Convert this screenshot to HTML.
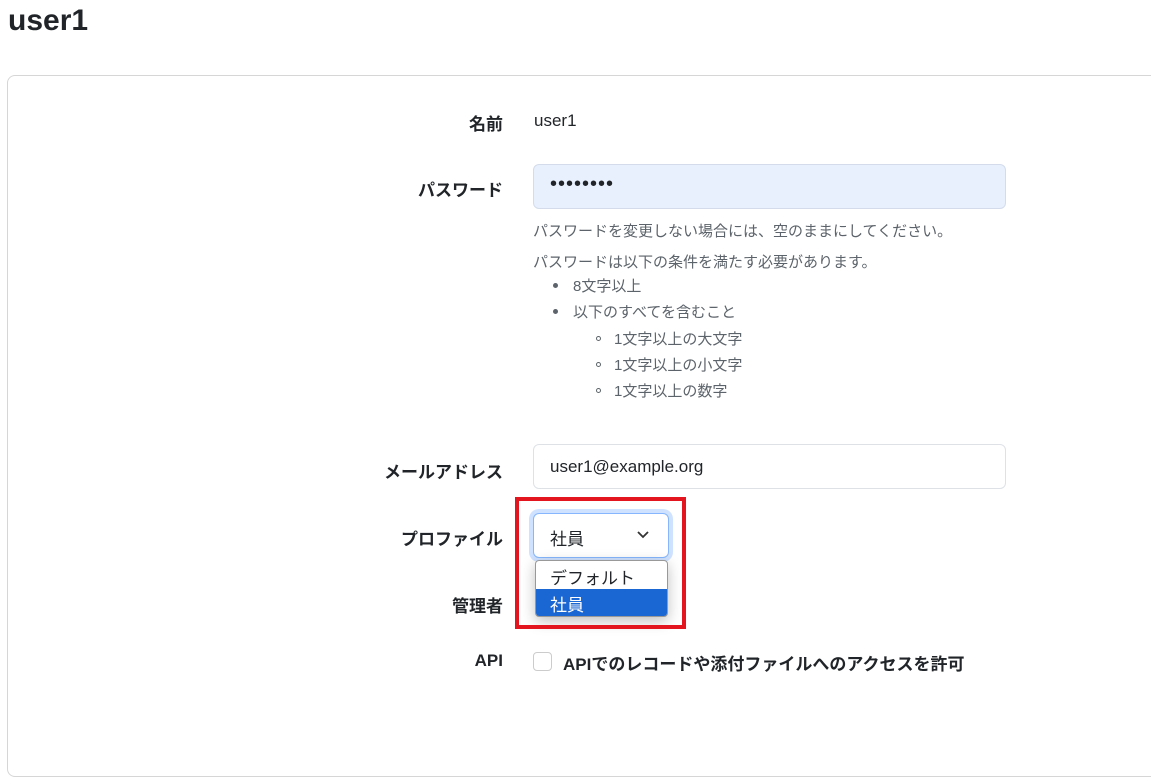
<!DOCTYPE html>
<html><head><meta charset="utf-8"><style>
body{margin:0;width:1151px;height:686px;overflow:hidden;background:#fff;font-family:"Liberation Sans","Noto Sans CJK JP",sans-serif;color:#212529;position:relative}
.a{position:absolute}
.lbl{position:absolute;right:648px;font-size:17px;font-weight:bold;white-space:nowrap}
.inp{position:absolute;left:533px;width:473px;height:45px;border:1px solid #dee2e6;border-radius:6px;box-sizing:border-box}
.help{position:absolute;font-size:15px;color:#5c636a;white-space:nowrap}
.dot{position:absolute;width:5px;height:5px;border-radius:50%;background:#5c636a}
.circ{position:absolute;width:5px;height:5px;border-radius:50%;border:1px solid #5c636a;box-sizing:border-box}
</style></head><body>
<div class="a" style="left:8px;top:4px;font-size:30px;font-weight:bold;">user1</div>
<div class="a" style="left:7px;top:75px;width:1160px;height:700px;border:1px solid #d6d6d6;border-radius:8px;"></div>

<div class="lbl" style="top:110px">名前</div>
<div class="a" style="left:534px;top:111px;font-size:17px">user1</div>

<div class="lbl" style="top:176px">パスワード</div>
<div class="inp" style="top:164px;background:#e8f0fe;border-color:#d4dcec;"><span class="a" style="left:16px;top:8px;font-size:20px;letter-spacing:1px">••••••••</span></div>
<div class="help" style="left:533px;top:220px">パスワードを変更しない場合には、空のままにしてください。</div>
<div class="help" style="left:533px;top:251px">パスワードは以下の条件を満たす必要があります。</div>
<div class="dot" style="left:553px;top:283px"></div><div class="help" style="left:573px;top:275px">8文字以上</div>
<div class="dot" style="left:553px;top:309px"></div><div class="help" style="left:573px;top:301px">以下のすべてを含むこと</div>
<div class="circ" style="left:596px;top:336px"></div><div class="help" style="left:614px;top:328px">1文字以上の大文字</div>
<div class="circ" style="left:596px;top:362px"></div><div class="help" style="left:614px;top:354px">1文字以上の小文字</div>
<div class="circ" style="left:596px;top:388px"></div><div class="help" style="left:614px;top:380px">1文字以上の数字</div>

<div class="lbl" style="top:458px">メールアドレス</div>
<div class="inp" style="top:444px"><span class="a" style="left:16px;top:12px;font-size:17px">user1@example.org</span></div>

<div class="lbl" style="top:525px">プロファイル</div>
<div class="a" style="left:533px;top:513px;width:136px;height:45px;border:1px solid #86b7fe;border-radius:6px;box-sizing:border-box;box-shadow:0 0 0 4px #cfe2ff;background:#fff">
<span class="a" style="left:16px;top:11px;font-size:17px">社員</span>
<svg class="a" style="left:102px;top:16px" width="14" height="10" viewBox="0 0 14 10"><path d="M2 2l5 5 5-5" fill="none" stroke="#333" stroke-width="1.8"/></svg>
</div>
<div class="a" style="left:535px;top:560px;width:133px;height:57px;border:1px solid #999;border-radius:4px;box-sizing:border-box;background:#fff;box-shadow:0 4px 14px rgba(0,0,0,.25);overflow:hidden">
<div class="a" style="left:14px;top:3px;font-size:17px">デフォルト</div>
<div class="a" style="left:0;top:28px;width:133px;height:28px;background:#1a66d2;color:#fff"><span class="a" style="left:14px;top:2px;font-size:17px">社員</span></div>
</div>
<div class="a" style="left:515px;top:497px;width:171px;height:132px;border:4px solid #e3161f;box-sizing:border-box"></div>

<div class="lbl" style="top:592px">管理者</div>

<div class="lbl" style="top:651px">API</div>
<div class="a" style="left:533px;top:652px;width:19px;height:19px;border:1px solid #ccc;border-radius:4px;box-sizing:border-box"></div>
<div class="a" style="left:563px;top:650px;font-size:17px;font-weight:bold">APIでのレコードや添付ファイルへのアクセスを許可</div>
</body></html>
